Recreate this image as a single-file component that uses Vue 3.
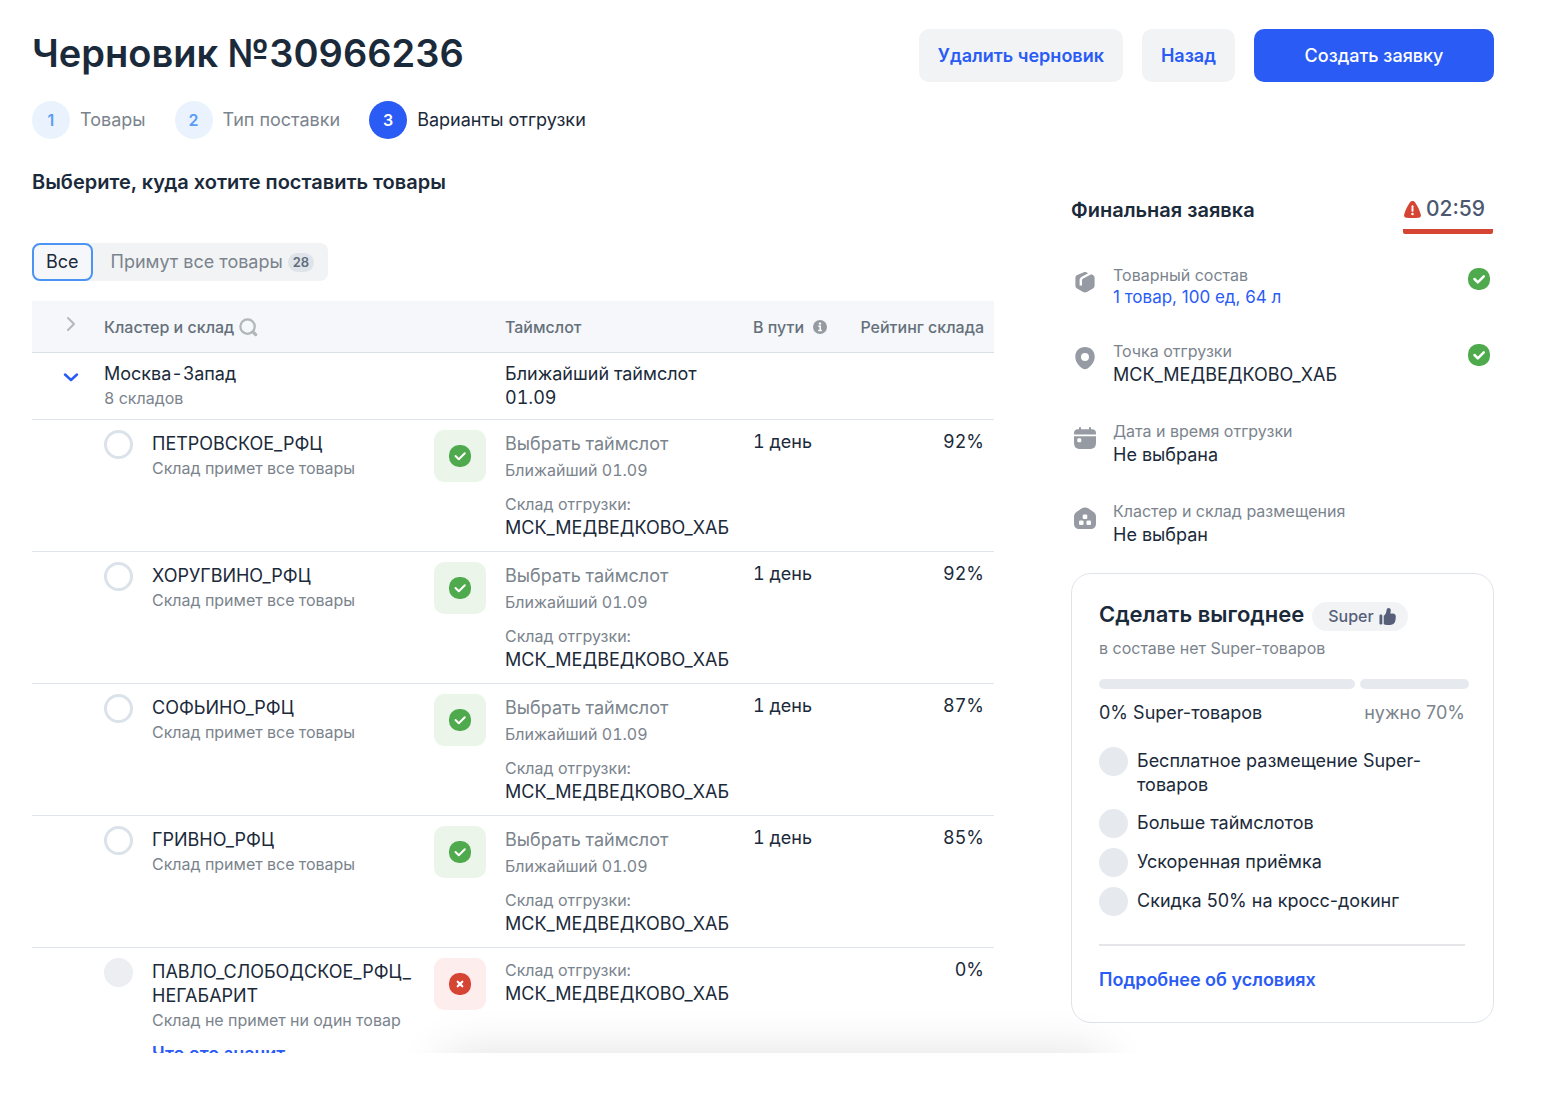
<script setup>
import { ref } from 'vue'

const steps = ['Товары', 'Тип поставки', 'Варианты отгрузки']
const currentStep = 2

const filter = ref('all')
const selected = ref(null)

const hub = 'МСК_МЕДВЕДКОВО_ХАБ'
const warehouses = [
  { id: 'petrovskoe', name: 'ПЕТРОВСКОЕ_РФЦ', ok: true, transit: '1 день', rating: '92%' },
  { id: 'horugvino', name: 'ХОРУГВИНО_РФЦ', ok: true, transit: '1 день', rating: '92%' },
  { id: 'sofino', name: 'СОФЬИНО_РФЦ', ok: true, transit: '1 день', rating: '87%' },
  { id: 'grivno', name: 'ГРИВНО_РФЦ', ok: true, transit: '1 день', rating: '85%' },
  { id: 'pavlo', name: 'ПАВЛО_СЛОБОДСКОЕ_РФЦ_НЕГАБАРИТ', ok: false, transit: '', rating: '0%' }
]

const summary = [
  { icon: 'box', label: 'Товарный состав', value: '1 товар, 100 ед, 64 л', link: true, done: true },
  { icon: 'pin', label: 'Точка отгрузки', value: hub, done: true },
  { icon: 'calendar', label: 'Дата и время отгрузки', value: 'Не выбрана' },
  { icon: 'house', label: 'Кластер и склад размещения', value: 'Не выбран' }
]

const perks = [
  'Бесплатное размещение Super-товаров',
  'Больше таймслотов',
  'Ускоренная приёмка',
  'Скидка 50% на кросс-докинг'
]
</script>

<template>
  <main class="page">
    <header class="top">
      <h1>Черновик №30966236</h1>
      <div class="actions">
        <button type="button" class="btn">Удалить черновик</button>
        <button type="button" class="btn">Назад</button>
        <button type="button" class="btn primary">Создать заявку</button>
      </div>
    </header>

    <ol class="steps">
      <li v-for="(step, i) in steps" :key="step" :class="{ current: i === currentStep }">
        <span class="num">{{ i + 1 }}</span>
        <span>{{ step }}</span>
      </li>
    </ol>

    <div class="columns">
      <section class="choice">
        <h2>Выберите, куда хотите поставить товары</h2>

        <div class="tabs">
          <button type="button" :class="{ active: filter === 'all' }" @click="filter = 'all'">Все</button>
          <button type="button" :class="{ active: filter === 'full' }" @click="filter = 'full'">
            Примут все товары <span class="count">28</span>
          </button>
        </div>

        <table>
          <colgroup>
            <col class="c-toggle" />
            <col />
            <col class="c-status" />
            <col class="c-slot" />
            <col class="c-transit" />
            <col class="c-rating" />
          </colgroup>
          <thead>
            <tr>
              <th class="toggle">
                <button type="button" class="icon-btn" aria-label="Развернуть все">
                  <svg width="18" height="18" viewBox="0 0 18 18"><path d="M6 3l6 6-6 6" fill="none" stroke="#b3b8bd" stroke-width="2" stroke-linecap="round" stroke-linejoin="round" /></svg>
                </button>
              </th>
              <th colspan="2">
                <span class="th-line">
                  Кластер и склад
                  <button type="button" class="icon-btn" aria-label="Поиск">
                    <svg width="18" height="18" viewBox="0 0 20 20" fill="none" stroke="#b1b6b9" stroke-linecap="round"><circle cx="9.500" cy="9.500" r="8" stroke-width="2.500" /><path d="M15.500 15.500l3 3" stroke-width="3.500" /></svg>
                  </button>
                </span>
              </th>
              <th>Таймслот</th>
              <th>
                <span class="th-line gap">
                  В пути
                  <svg width="14" height="14" viewBox="0 0 14 14"><circle cx="7" cy="7" r="7" fill="#969ba1" /><circle cx="7" cy="3.600" r="1.200" fill="#fff" /><path d="M5.300 6.200H7.200V10.500M5.200 10.600H8.900" fill="none" stroke="#fff" stroke-width="1.500" /></svg>
                </span>
              </th>
              <th class="right">Рейтинг склада</th>
            </tr>
          </thead>
          <tbody>
            <tr class="cluster">
              <td class="toggle">
                <button type="button" class="icon-btn" aria-label="Свернуть кластер">
                  <svg width="18" height="18" viewBox="0 0 18 18"><path d="M3 6.500l6 5.500 6-5.500" fill="none" stroke="#2a5bf5" stroke-width="2.500" stroke-linecap="round" stroke-linejoin="round" /></svg>
                </button>
              </td>
              <td colspan="2">
                <div class="main">Москва-Запад</div>
                <div class="sub">8 складов</div>
              </td>
              <td colspan="3">
                <div class="main">Ближайший таймслот</div>
                <div class="main">01.09</div>
              </td>
            </tr>
            <tr v-for="w in warehouses" :key="w.id">
              <td></td>
              <td>
                <div class="pick">
                  <input :id="w.id" v-model="selected" type="radio" name="warehouse" :value="w.id" :disabled="!w.ok" />
                  <div class="who">
                    <label class="main" :for="w.id">{{ w.name }}</label>
                    <div class="sub">{{ w.ok ? 'Склад примет все товары' : 'Склад не примет ни один товар' }}</div>
                    <a v-if="!w.ok" href="#" class="why">Что это значит</a>
                  </div>
                </div>
              </td>
              <td>
                <span class="badge" :class="{ bad: !w.ok }">
                  <svg width="22" height="22" viewBox="0 0 22 22">
                    <rect width="22" height="22" rx="10" :fill="w.ok ? '#4fa94d' : '#d64534'" />
                    <path v-if="w.ok" d="M6.500 11l3.300 3.300 6-6" fill="none" stroke="#fff" stroke-width="2" stroke-linecap="round" stroke-linejoin="round" />
                    <path v-else d="M8.700 8.700l4.600 4.600M13.300 8.700l-4.600 4.600" fill="none" stroke="#fff" stroke-width="2.200" stroke-linecap="round" />
                  </svg>
                </span>
              </td>
              <td>
                <template v-if="w.ok">
                  <button type="button" class="slot">Выбрать таймслот</button>
                  <div class="sub nearest">Ближайший 01.09</div>
                </template>
                <div class="sub">Склад отгрузки:</div>
                <div class="main">{{ hub }}</div>
              </td>
              <td>{{ w.transit }}</td>
              <td class="right">{{ w.rating }}</td>
            </tr>
          </tbody>
        </table>
      </section>

      <aside class="final">
        <div class="final-head">
          <h2>Финальная заявка</h2>
          <div class="timer">
            <svg width="19" height="17" viewBox="0 0 20 18"><path d="M10 0c1.300 0 2.300.7 3 1.900C15.500 5.600 17.500 9.800 18.800 14.200c.6 2-.5 3.300-2.500 3.500-4.200.4-8.400.4-12.600 0-2-.2-3.100-1.500-2.500-3.500C2.500 9.800 4.500 5.600 7 1.900 7.700.7 8.700 0 10 0z" fill="#d64534" /><path d="M10 5.500v5" stroke="#fff" stroke-width="2" stroke-linecap="round" /><circle cx="10" cy="13.700" r="1.300" fill="#fff" /></svg>
            02:59
          </div>
        </div>

        <ul class="summary">
          <li v-for="item in summary" :key="item.icon">
            <svg class="ico" width="22" height="22" viewBox="0 0 22 22">
              <template v-if="item.icon === 'box'">
                <path d="M9.300 1.500c1-.6 2.400-.6 3.400 0l1.500.8-6.500 3.500C6.300 6.600 5.600 7.700 5.600 9.200v5.300H8V9.600c0-.9.400-1.500 1.200-2l8.100-4.400 1.500.9c1.200.7 1.800 1.700 1.800 3.100v7.400c0 1.400-.6 2.300-1.700 3l-6 3.400c-1.200.6-2.600.6-3.800 0l-6-3.400c-1.100-.7-1.700-1.600-1.700-3V7.200c0-1.400.6-2.400 1.800-3.100z" fill="#969ba3" />
              </template>
              <template v-else-if="item.icon === 'pin'">
                <path fill-rule="evenodd" d="M11 0c5.700 0 9.700 4 9.700 9.500 0 5.200-3.400 9.500-7.200 11.900-1.600 1-3.400 1-5 0C4.700 19 1.300 14.700 1.300 9.500 1.300 4 5.300 0 11 0zm0 6a4 4 0 100 8 4 4 0 000-8z" fill="#969ba3" />
              </template>
              <template v-else-if="item.icon === 'calendar'">
                <path d="M6 1v3M16 1v3" stroke="#969ba3" stroke-width="2" stroke-linecap="round" />
                <path d="M0 7.500V6.300C0 3.300 1.300 2.200 4 2.200h14c2.700 0 4 1.100 4 4.100v1.200z" fill="#969ba3" />
                <path fill-rule="evenodd" d="M0 9.200h22V15c0 5-1.800 7-6.500 7h-9C1.800 22 0 20 0 15zm4.800 2c-1 0-1.500.5-1.500 1.500v1c0 1 .5 1.500 1.500 1.500h1c1 0 1.500-.5 1.500-1.500v-1c0-1-.5-1.500-1.500-1.500z" fill="#969ba3" />
              </template>
              <template v-else>
                <path d="M7.500 1.500c2.200-1.500 4.800-1.500 7 0l4.700 3.300C21.200 6.200 22 7.600 22 10v6c0 4.300-1.700 6-6 6H6c-4.300 0-6-1.700-6-6v-6c0-2.400.8-3.800 2.800-5.200z" fill="#969ba3" />
                <g fill="#fff"><rect x="8.700" y="7.500" width="4.600" height="4.600" rx="1.300" /><rect x="5" y="13.500" width="4.600" height="4.600" rx="1.300" /><rect x="12.400" y="13.500" width="4.600" height="4.600" rx="1.300" /></g>
              </template>
            </svg>
            <div class="info">
              <div class="label">{{ item.label }}</div>
              <a v-if="item.link" href="#" class="value-link">{{ item.value }}</a>
              <div v-else class="value">{{ item.value }}</div>
            </div>
            <svg v-if="item.done" width="22" height="22" viewBox="0 0 22 22"><rect width="22" height="22" rx="10" fill="#4fa94d" /><path d="M6.500 11l3.300 3.300 6-6" fill="none" stroke="#fff" stroke-width="2.500" stroke-linecap="round" stroke-linejoin="round" /></svg>
          </li>
        </ul>

        <section class="card">
          <div class="card-title">
            <h3>Сделать выгоднее</h3>
            <span class="pill">
              Super
              <svg width="17" height="17" viewBox="0 0 18 18" fill="#566079"><rect x="0.500" y="7" width="3" height="10.500" rx="1.300" /><path d="M5 8.300C7 7 7.700 5 8 2.300 8.200.8 9 0 10.200 0c1.500 0 2.300 1 2.300 2.500 0 1.200-.2 2.200-.6 3.300h2.600c2.300 0 3.400 1.400 3.300 3.400l-.3 3.300c-.4 3.500-2.200 5.500-5.700 5.500H8.500c-1.300 0-2.400-.2-3.500-.7z" /></svg>
            </span>
          </div>
          <p class="card-sub">в составе нет Super-товаров</p>
          <div class="bar"><span></span><span></span></div>
          <div class="share"><span>0% Super-товаров</span><span class="need">нужно 70%</span></div>
          <ul class="perks">
            <li v-for="perk in perks" :key="perk"><span class="dot"></span><span class="perk">{{ perk }}</span></li>
          </ul>
          <hr />
          <a href="#" class="more">Подробнее об условиях</a>
        </section>
      </aside>
    </div>
    <div class="glow"></div>
  </main>
</template>

<style>
body {
  background: #fff;
}
</style>

<style scoped>
* {
  box-sizing: border-box;
}
.page {
  position: relative;
  height: calc(100vh - 41px);
  padding: 29px 54px 0 32px;
  overflow: hidden;
  color: #1b2a3a;
  font: 400 18px/24px Inter, "Noto Sans", sans-serif;
}
h1, h2, h3, p, ol, ul {
  margin: 0;
  padding: 0;
}
ol, ul {
  list-style: none;
}
button {
  border: 0;
  padding: 0;
  background: none;
  color: inherit;
  font: inherit;
  cursor: pointer;
}
a {
  color: #2a5bf5;
  text-decoration: none;
}
svg {
  display: block;
  flex: none;
  overflow: visible;
}
.top {
  display: flex;
  justify-content: space-between;
  align-items: flex-start;
}
h1 {
  font-size: 38px;
  font-weight: 600;
  line-height: 48px;
}
.actions {
  display: flex;
  gap: 19px;
}
.btn {
  height: 53px;
  padding: 0 19px;
  border-radius: 10px;
  background: #f1f3f5;
  color: #2a5bf5;
  font-weight: 600;
}
.btn.primary {
  min-width: 240px;
  background: #2a5bf5;
  color: #fff;
  font-weight: 500;
}
.steps {
  display: flex;
  gap: 29px;
  margin-top: 19px;
}
.steps li {
  display: flex;
  align-items: center;
  gap: 10px;
  color: #7b848d;
}
.num {
  display: grid;
  place-items: center;
  width: 38px;
  height: 38px;
  border-radius: 50%;
  background: #eaf3fd;
  color: #5a9cf5;
  font-size: 16px;
  font-weight: 600;
}
.steps .current {
  color: #1b2a3a;
}
.current .num {
  background: #2a5bf5;
  color: #fff;
}
.columns {
  display: grid;
  grid-template-columns: minmax(0, 1fr) 423px;
  gap: 77px;
}
h2 {
  font-size: 20px;
  font-weight: 600;
  line-height: 26px;
}
.choice {
  padding-top: 30px;
}
.tabs {
  display: inline-flex;
  margin: 48px 0 20px;
  border-radius: 8px;
  background: #f1f3f5;
  color: #7b848d;
  vertical-align: top;
}
.tabs button {
  display: flex;
  align-items: center;
  gap: 5px;
  height: 38px;
  padding: 0 14px 0 18px;
  border-radius: 8px;
}
.tabs .active {
  padding: 0 12px;
  border: 2px solid #4c94f3;
  background: #f5f7fb;
  color: #1b2a3a;
}
.count {
  padding: 0 5px;
  border-radius: 10px;
  background: #dfe4ea;
  color: #626b7a;
  font-size: 13px;
  font-weight: 600;
  line-height: 19px;
}
table {
  width: 100%;
  border-collapse: collapse;
  table-layout: fixed;
}
.c-toggle {
  width: 72px;
}
.c-status {
  width: 71px;
}
.c-slot {
  width: 248px;
}
.c-transit {
  width: 88px;
}
.c-rating {
  width: 153px;
}
th {
  height: 51px;
  padding: 2px 0 0;
  border-bottom: 1px solid #d7dfe8;
  background: #f5f7fb;
  color: #66707a;
  font-size: 16px;
  font-weight: 500;
  text-align: left;
  white-space: nowrap;
}
td {
  padding: 10px 0 11px;
  border-bottom: 1px solid #dfe5eb;
  font-variant-numeric: tabular-nums;
  vertical-align: top;
}
.toggle svg {
  margin-left: 30px;
}
.cluster td {
  padding: 9px 0;
}
.cluster .toggle {
  padding-top: 15px;
}
.th-line {
  display: flex;
  align-items: center;
  gap: 5px;
}
.th-line.gap {
  gap: 9px;
}
.right {
  padding-right: 10px;
  text-align: right;
}
.sub {
  color: #7b848d;
  font-size: 16px;
  line-height: 24px;
}
.main {
  display: block;
  line-height: 24px;
}
.pick {
  display: flex;
  gap: 19px;
}
.pick input {
  flex: none;
  width: 29px;
  height: 29px;
  margin: 0;
  border: 3px solid #dbe2e9;
  border-radius: 50%;
  background: #fff;
  appearance: none;
}
.pick input:checked {
  border: 9px solid #2a5bf5;
}
.pick input:disabled {
  border: 0;
  background: #eceef2;
}
.who {
  max-width: 266px;
  padding-top: 2px;
  overflow-wrap: anywhere;
}
.why {
  display: block;
  margin-top: 10px;
  font-weight: 600;
}
.badge {
  display: grid;
  place-items: center;
  width: 52px;
  height: 52px;
  border-radius: 10px;
  background: #ebf5ea;
}
.badge.bad {
  background: #fdeeed;
}
.slot {
  display: block;
  padding-top: 2px;
  color: #7b848d;
}
.nearest {
  margin: 2px 0 10px;
}
.final {
  padding-top: 58px;
}
.final-head {
  display: flex;
  justify-content: space-between;
  align-items: flex-start;
}
.timer {
  display: flex;
  align-items: center;
  gap: 4px;
  width: 90px;
  margin-right: 1px;
  padding-bottom: 8px;
  border-bottom: 5px solid #d64534;
  border-radius: 2px;
  color: #4d5870;
  font-size: 21px;
  font-weight: 500;
}
.summary {
  display: grid;
  gap: 32px;
  margin-top: 29px;
}
.summary li {
  display: flex;
  align-items: flex-start;
  padding: 0 4px 0 3px;
}
.ico {
  margin: 8px 17px 0 0;
}
.info {
  flex: 1;
}
.info + svg {
  margin-top: 5px;
}
.label {
  color: #7b848d;
  font-size: 16px;
  line-height: 24px;
}
.value-link {
  display: block;
  font-size: 17px;
  line-height: 20px;
}
.card {
  margin-top: 26px;
  padding: 28px 28px 30px 27px;
  border: 1px solid #dfe4eb;
  border-radius: 20px;
}
.card-title {
  display: flex;
  align-items: flex-start;
  gap: 8px;
}
h3 {
  font-size: 22px;
  font-weight: 600;
  line-height: 24px;
}
.pill {
  display: flex;
  align-items: center;
  gap: 5px;
  padding: 0 12px 0 16px;
  border-radius: 15px;
  background: #f1f3f5;
  color: #566079;
  font-size: 16px;
  font-weight: 500;
  line-height: 29px;
}
.card-sub {
  margin-top: 5px;
  color: #7b848d;
  font-size: 16px;
}
.bar {
  display: grid;
  grid-template-columns: 7fr 3fr;
  gap: 5px;
  margin: 19px -4px 12px 0;
}
.bar span {
  height: 10px;
  border-radius: 5px;
  background: #e6eaef;
}
.share {
  display: flex;
  justify-content: space-between;
}
.need {
  color: #7b848d;
}
.perks {
  display: grid;
  gap: 10px;
  margin-top: 22px;
}
.perks li {
  display: flex;
  gap: 9px;
}
.dot {
  flex: none;
  width: 29px;
  height: 29px;
  border-radius: 50%;
  background: #e6eaef;
}
.perk {
  padding: 2px 0;
}
hr {
  height: 2px;
  margin: 28px 0 22px;
  border: 0;
  background: #e4e6ea;
}
.more {
  font-weight: 600;
}
.glow {
  position: absolute;
  top: 100%;
  left: 50%;
  width: 660px;
  height: 60px;
  margin-left: -330px;
  box-shadow: 0 0 48px rgba(0, 0, 0, 0.12);
}
</style>
